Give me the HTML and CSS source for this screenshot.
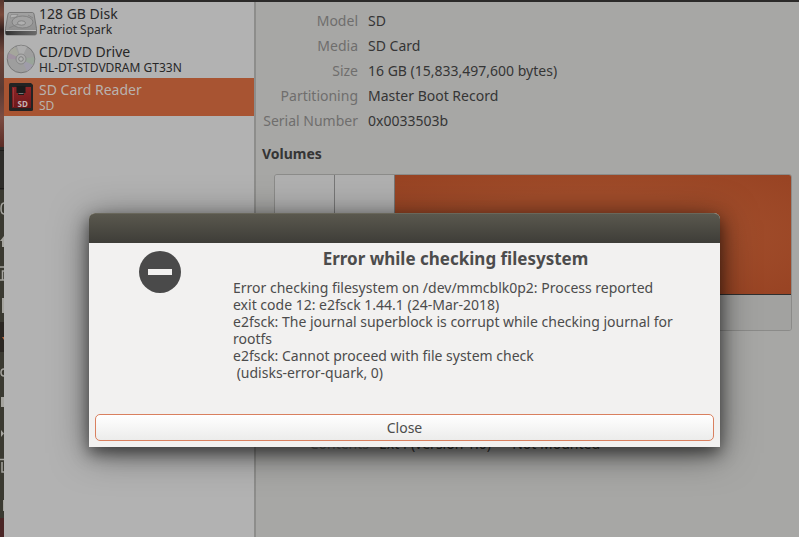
FILE: index.html
```html
<!DOCTYPE html>
<html lang="en">
<head>
<meta charset="utf-8">
<title>Disks</title>
<link rel="stylesheet" href="styles.css">
</head>
<body>
<div class="screen">
  <div class="backdrop" aria-hidden="true">
    <svg width="4" height="537" viewBox="0 0 4 537">
      <defs>
        <linearGradient id="wall" x1="0" y1="0" x2="0" y2="1">
          <stop offset="0" stop-color="#57372f"/>
          <stop offset=".1" stop-color="#7a4a3c"/>
          <stop offset=".2" stop-color="#35221f"/>
          <stop offset=".36" stop-color="#70463b"/>
          <stop offset=".6" stop-color="#5a3a33"/>
          <stop offset=".8" stop-color="#7b4c42"/>
          <stop offset="1" stop-color="#5b2c25"/>
        </linearGradient>
      </defs>
      <rect width="4" height="147" fill="url(#wall)"/>
      <rect y="147" width="4" height="43" fill="#2d2c29"/>
      <path d="M0 150.500h4M0 188.500h4" stroke="#1c1b19"/>
      <rect y="190" width="4" height="132" fill="#3a3931"/>
      <rect y="322" width="4" height="30" fill="#2a2622"/>
      <rect y="352" width="4" height="166" fill="#3a3931"/>
      <rect y="518" width="4" height="19" fill="#4a2525"/>
      <g fill="none" stroke="#a5a49f" stroke-width="1.500">
        <path d="M4 203C0 203 0 214 4 214"/>
        <path d="M0 267H4M2.500 280V271H4M0 280H4"/>
        <path d="M4 369C0 369 0 376 4 376"/>
        <path d="M0 459.500H4M2 462V472H4"/>
      </g>
      <path d="M0 241L4 236V247H2V241Z" fill="#a5a49f"/>
      <path d="M2 298H4V313H2Z" fill="#a5a49f"/>
      <path d="M1 397H4V407H1Z" fill="#a5a49f"/>
      <path d="M3 500H4V511H3Z" fill="#a5a49f"/>
      <path d="M1 430L4 433.500L1 437Z" fill="#a5a49f"/>
      <path d="M2 337H4V340Z" fill="#b5653f"/>
    </svg>
  </div>

  <div class="window">
    <nav class="drives" aria-label="Drives">
      <a class="drive" href="#disk">
        <svg class="drive-icon" viewBox="0 0 34 34" aria-hidden="true">
          <defs>
            <linearGradient id="hdd" x1="0" y1="0" x2="0" y2="1">
              <stop offset="0" stop-color="#a2a2a2"/>
              <stop offset="1" stop-color="#8b8b8b"/>
            </linearGradient>
            <linearGradient id="hdd-edge" x1="0" y1="0" x2="1" y2="0">
              <stop offset="0" stop-color="#303030"/>
              <stop offset=".4" stop-color="#4c4c4c"/>
              <stop offset="1" stop-color="#6a6a6a"/>
            </linearGradient>
          </defs>
          <path d="M5.500 8.500H28.500Q29.500 8.500 30 10L32.500 24.500V29Q32.500 31 31 31H3Q1.500 31 1.500 29V24.500L4 10Q4.500 8.500 5.500 8.500Z" fill="url(#hdd)" stroke="#6c6c6c" stroke-width=".8"/>
          <path d="M1.500 27H32.500V29Q32.500 31 31 31H3Q1.500 31 1.500 29Z" fill="url(#hdd-edge)"/>
          <path d="M2 26.500H32" stroke="#bcbcbc" stroke-width="1"/>
          <path d="M7 10.500H14L12 13L6 14Z" fill="#b3b3b3" stroke="#808080" stroke-width=".6"/>
          <ellipse cx="18.500" cy="18" rx="10.500" ry="6" fill="#a3a3a3" stroke="#7a7a7a" stroke-width=".8"/>
          <ellipse cx="17.500" cy="19" rx="4" ry="2.200" fill="#b0b0b0" stroke="#777" stroke-width=".8"/>
          <path d="M5 24L14 20M24 11L29 14" stroke="#808080" stroke-width=".8"/>
        </svg>
        <span class="drive-text"><span class="drive-name">128 GB Disk</span><span class="drive-model">Patriot Spark</span></span>
      </a>
      <a class="drive" href="#optical">
        <svg class="drive-icon" viewBox="0 0 34 34" aria-hidden="true">
          <circle cx="17" cy="17" r="13.800" fill="#9e9e9e" stroke="#6c6c6c" stroke-width=".8"/>
          <path d="M17 17L5 11Q7 7 11 5Z" fill="#a5a69c"/>
          <path d="M17 17L3.500 17Q3.500 14 5 11Z" fill="#a093a1"/>
          <path d="M17 17L29 23Q27 27 23 29Z" fill="#9f9ca9"/>
          <path d="M17 17L30 15Q31 19 29 23Z" fill="#99a599"/>
          <path d="M17 17L13 4Q19 2.500 23 5Z" fill="#adadad"/>
          <circle cx="17" cy="17" r="5" fill="#acacac" stroke="#808080" stroke-width=".8"/>
          <circle cx="17" cy="17" r="2.300" fill="#b2b2b2" stroke="#757575" stroke-width=".8"/>
        </svg>
        <span class="drive-text"><span class="drive-name">CD/DVD Drive</span><span class="drive-model">HL-DT-STDVDRAM GT33N</span></span>
      </a>
      <a class="drive drive-selected" href="#sd" aria-current="true">
        <svg class="drive-icon" viewBox="0 0 34 34" aria-hidden="true">
          <defs>
            <linearGradient id="sd" x1="0" y1="0" x2="0" y2="1">
              <stop offset="0" stop-color="#8e2426"/>
              <stop offset="1" stop-color="#6a181a"/>
            </linearGradient>
          </defs>
          <path d="M6.500 3H27L29 5V29.500Q29 31 27.500 31H6.500Q5 31 5 29.500V4.500Q5 3 6.500 3Z" fill="#232323"/>
          <path d="M8 7H27V28H8Z" fill="url(#sd)"/>
          <path d="M9.500 8V27" stroke="#a84345" stroke-width=".7"/>
          <path d="M12.500 6H21.500V13H20V15H14V13H12.500Z" fill="#1b1b1b"/>
          <path d="M14.500 13.500H19.500" stroke="#8f8f8f" stroke-width=".8"/>
          <text class="sd-mark" x="13.500" y="27">SD</text>
        </svg>
        <span class="drive-text"><span class="drive-name">SD Card Reader</span><span class="drive-model">SD</span></span>
      </a>
    </nav>

    <main class="details">
      <dl class="facts">
        <dt>Model</dt><dd>SD</dd>
        <dt>Media</dt><dd>SD Card</dd>
        <dt>Size</dt><dd>16 GB (15,833,497,600 bytes)</dd>
        <dt>Partitioning</dt><dd>Master Boot Record</dd>
        <dt>Serial Number</dt><dd>0x0033503b</dd>
      </dl>
      <h2 class="section-title">Volumes</h2>
      <div class="volumes">
        <div class="volume-grid">
          <div class="volume"></div>
          <div class="volume"></div>
          <div class="volume volume-selected"></div>
        </div>
        <div class="volume-toolbar"></div>
      </div>
      <dl class="volume-facts">
        <dt>Contents</dt><dd>Ext4 (version 1.0) — Not Mounted</dd>
      </dl>
    </main>
  </div>

  <section class="dialog" role="alertdialog" aria-labelledby="dialog-title" aria-describedby="dialog-message">
    <div class="titlebar"></div>
    <div class="dialog-body">
      <svg class="error-icon" viewBox="0 0 42 42" aria-hidden="true">
        <circle cx="21" cy="21" r="21" fill="#4a4a4a"/>
        <rect x="9" y="18" width="24" height="6" fill="#f2f1f0"/>
      </svg>
      <div class="dialog-text">
        <h1 class="dialog-title" id="dialog-title">Error while checking filesystem</h1>
        <p class="message" id="dialog-message">Error checking filesystem on /dev/mmcblk0p2: Process reported
exit code 12: e2fsck 1.44.1 (24-Mar-2018)
e2fsck: The journal superblock is corrupt while checking journal for
rootfs
e2fsck: Cannot proceed with file system check
 (udisks-error-quark, 0)</p>
      </div>
    </div>
    <div class="actions"><button class="close" type="button">Close</button></div>
  </section>
</div>
</body>
</html>
```
FILE: styles.css
```css
* { box-sizing: border-box; }

body {
  margin: 0;
  background: #a7a7a5;
  color: #353535;
  font: 14px/17px "Noto Sans", "Open Sans", sans-serif;
}

.screen {
  position: relative;
  display: flex;
  min-height: 100vh;
  overflow: hidden;
}

.backdrop {
  flex: none;
  width: 4px;
  background: #4a2525;
}

.backdrop svg { display: block; }

.window {
  flex: 1;
  display: flex;
  min-width: 0;
  border-top: 2px solid #2b2a29;
}

.drives {
  flex: none;
  width: 252px;
  background: #b2b2b2;
  border-right: 2px solid #8d8d8b;
}

.drive {
  display: flex;
  align-items: center;
  gap: 1px;
  height: 38px;
  color: #272727;
  text-decoration: none;
}

.drive-icon {
  flex: none;
  width: 34px;
  height: 34px;
}

.drive-text {
  display: flex;
  flex-direction: column;
  white-space: nowrap;
}

.drive-model {
  font-size: 12px;
  line-height: 16px;
}

.drive-selected {
  background: #a85432;
  color: #b9b2ae;
}

.sd-mark {
  fill: #c4b4b4;
  font-size: 8px;
  font-weight: bold;
}

.details {
  flex: 1;
  min-width: 0;
  padding: 6px 7px 0 6px;
}

.facts,
.volume-facts {
  display: grid;
  grid-template-columns: 96px 1fr;
  column-gap: 10px;
  margin: 0;
  line-height: 25px;
}

.facts dt,
.volume-facts dt {
  color: #6f6e6d;
  text-align: right;
  white-space: nowrap;
}

.facts dd,
.volume-facts dd { margin: 0; }

.section-title {
  margin: 12px 0;
  font-size: 14px;
  line-height: 17px;
}

.volumes {
  margin-left: 12px;
  border: 1px solid #8b8b89;
  border-radius: 3px;
  overflow: hidden;
}

.volume-grid {
  display: grid;
  grid-template-columns: 60px 60px 1fr;
  height: 120px;
  border-bottom: 1px solid #2f2f2f;
}

.volume {
  background: #b0b0b0;
  border-right: 1px solid #777;
}

.volume-selected {
  background: radial-gradient(ellipse at center, #a04c2a 50%, #984323 100%);
  border-right: 0;
}

.volume-toolbar {
  height: 35px;
  background: #a2a2a0;
}

.volume-facts {
  margin: 100px 0 0 11px;
}

.dialog {
  position: absolute;
  top: 213px;
  left: 89px;
  right: 79px;
  border-radius: 6px 6px 0 0;
  background: #f2f1f0;
  box-shadow: 0 6px 16px rgba(0, 0, 0, .5), 0 6px 36px rgba(0, 0, 0, .5);
  color: #4c4c4c;
}

.titlebar {
  height: 30px;
  border-top: 1px solid #69675b;
  border-radius: 6px 6px 0 0;
  background: linear-gradient(#5a584e, #3e3d38);
}

.dialog-body {
  display: flex;
  gap: 52px;
  padding: 5px 42px 0 50px;
}

.error-icon {
  flex: none;
  width: 42px;
  height: 42px;
  margin-top: 3px;
}

.dialog-text {
  flex: 1;
  min-width: 0;
}

.dialog-title {
  margin: 0 0 10px;
  font-size: 17px;
  line-height: 21px;
  text-align: center;
}

.message {
  margin: 0;
  white-space: pre;
}

.actions {
  padding: 33px 6px 6px;
}

.close {
  display: block;
  width: 100%;
  height: 27px;
  padding: 0;
  border: 1px solid #d9805f;
  border-radius: 5px;
  background: linear-gradient(#fff, #ececeb);
  color: #4c4c4c;
  font: inherit;
}
```
